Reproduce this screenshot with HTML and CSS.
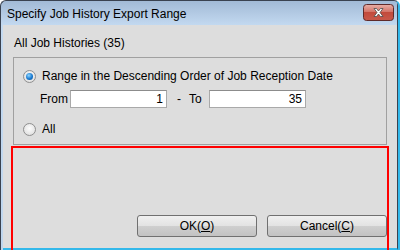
FILE: index.html
```html
<!DOCTYPE html>
<html lang="en">
<head>
    <meta charset="UTF-8">
    <title>Specify Job History Export Range</title>
    <link rel="stylesheet" href="styles.css">
</head>
<body>
    <div class="window">
        <!-- Title bar -->
        <div class="titlebar">
            <span class="title">Specify Job History Export Range</span>
            <button class="close" aria-label="Close">
                <svg width="31" height="17" viewBox="0 0 31 17">
                    <defs>
                        <linearGradient id="cg" x1="0" y1="0" x2="0" y2="1">
                            <stop offset="0" stop-color="#e8b0a8"/>
                            <stop offset="0.45" stop-color="#d47468"/>
                            <stop offset="0.5" stop-color="#c24a3c"/>
                            <stop offset="1" stop-color="#c8584a"/>
                        </linearGradient>
                    </defs>
                    <rect x="0.5" y="0.5" width="30" height="16" rx="3" fill="url(#cg)" stroke="#5e2a2a"/>
                    <path d="M11 4.5 L13.5 4.5 L15.5 7 L17.5 4.5 L20 4.5 L17 8.5 L20 12.5 L17.5 12.5 L15.5 10 L13.5 12.5 L11 12.5 L14 8.5 Z" fill="#fff" stroke="#4a4a4a" stroke-width="0.8" stroke-linejoin="round"/>
                </svg>
            </button>
        </div>

        <!-- Client area -->
        <div class="client">
            <p class="summary">All Job Histories (35)</p>

            <div class="group">
                <label class="option">
                    <input type="radio" name="range" checked>
                    <span>Range in the Descending Order of Job Reception Date</span>
                </label>
                <div class="range-row">
                    <span class="lbl-from">From</span>
                    <input class="num" type="text" value="1">
                    <span class="dash">-</span>
                    <span class="lbl-to">To</span>
                    <input class="num" type="text" value="35">
                </div>
                <label class="option option-all">
                    <input type="radio" name="range">
                    <span>All</span>
                </label>
            </div>

            <div class="actions">
                <button class="btn">OK(<u>O</u>)</button>
                <button class="btn">Cancel(<u>C</u>)</button>
            </div>
        </div>

        <!-- Highlight frame -->
        <div class="highlight"></div>
    </div>
</body>
</html>
```

FILE: styles.css
```css
* {
    box-sizing: border-box;
}

body {
    margin: 0;
    background: #fff;
    font-family: "Liberation Sans", Arial, sans-serif;
    font-size: 12px;
    color: #000;
}

/* Window frame */
.window {
    position: relative;
    width: 400px;
    height: 250px;
    display: flex;
    flex-direction: column;
    border-top: 1px solid #3a4250;
    border-left: 1px solid #3a4250;
    border-right: 2px solid #33b8ea;
    border-radius: 6px 6px 0 0;
    background: linear-gradient(#a2bad6, #c4daf1 25px, #bfd6ee);
    overflow: hidden;
}

/* Title bar */
.titlebar {
    height: 24px;
    flex-shrink: 0;
    display: flex;
    align-items: center;
    justify-content: space-between;
    padding: 0 3px 0 6px;
    border-right: 1px solid #3a4250;
}

.title {
    line-height: 14px;
    margin-top: 1px;
}

.close {
    border: none;
    padding: 0;
    background: none;
    width: 31px;
    height: 17px;
    margin-top: -2px;
    display: block;
}

.close svg {
    display: block;
}

/* Client area */
.client {
    flex: 1;
    margin-left: 2px;
    background: #dddddd;
    border-right: 1px solid #3a4250;
    border-bottom: 2px solid #33b8ea;
    padding: 11px 10px 0 10px;
}

.summary {
    margin: 0 0 7px 1px;
    line-height: 14px;
}

/* Group box */
.group {
    border: 1px solid #a0a0a0;
    padding: 11px 9px 9px 9px;
    height: 88px;
}

.option {
    display: flex;
    align-items: center;
    gap: 6px;
    line-height: 14px;
}

.option input {
    appearance: none;
    -webkit-appearance: none;
    margin: 0;
    width: 13px;
    height: 13px;
    border-radius: 50%;
    border: 1px solid #8f8f8f;
    background: radial-gradient(circle at 50% 40%, #fdfdfd, #d8d8d8);
    display: grid;
    place-items: center;
}

.option input:checked::after {
    content: "";
    width: 7px;
    height: 7px;
    border-radius: 50%;
    background: radial-gradient(circle at 40% 35%, #8fd6ff, #1a7ad0 55%, #0b4f8e);
}

.range-row {
    display: flex;
    align-items: center;
    padding-left: 17px;
    margin-top: 7px;
}

.lbl-from {
    width: 30px;
}

.num {
    width: 97px;
    height: 18px;
    border: 1px solid #a9a9a9;
    border-top-color: #8c8c8c;
    background: #fff;
    font: inherit;
    text-align: right;
    padding: 0 3px 0 0;
    color: #000;
}

.dash {
    margin: 0 8px 0 10px;
}

.lbl-to {
    width: 20px;
}

.option-all {
    margin-top: 14px;
}

/* Buttons */
.actions {
    display: flex;
    justify-content: flex-end;
    gap: 10px;
    margin-top: 70px;
}

.btn {
    width: 120px;
    height: 22px;
    border: 1px solid #707070;
    border-radius: 3px;
    background: linear-gradient(#f0f0f0, #e2e2e2 50%, #cfcfcf 50%, #c2c2c2);
    font: inherit;
    color: #000;
    padding: 0;
}

.btn u {
    text-underline-offset: 1px;
}

/* Red annotation frame */
.highlight {
    position: absolute;
    left: 10px;
    top: 145px;
    width: 378px;
    height: 120px;
    border: 2px solid #ff0000;
}
```
